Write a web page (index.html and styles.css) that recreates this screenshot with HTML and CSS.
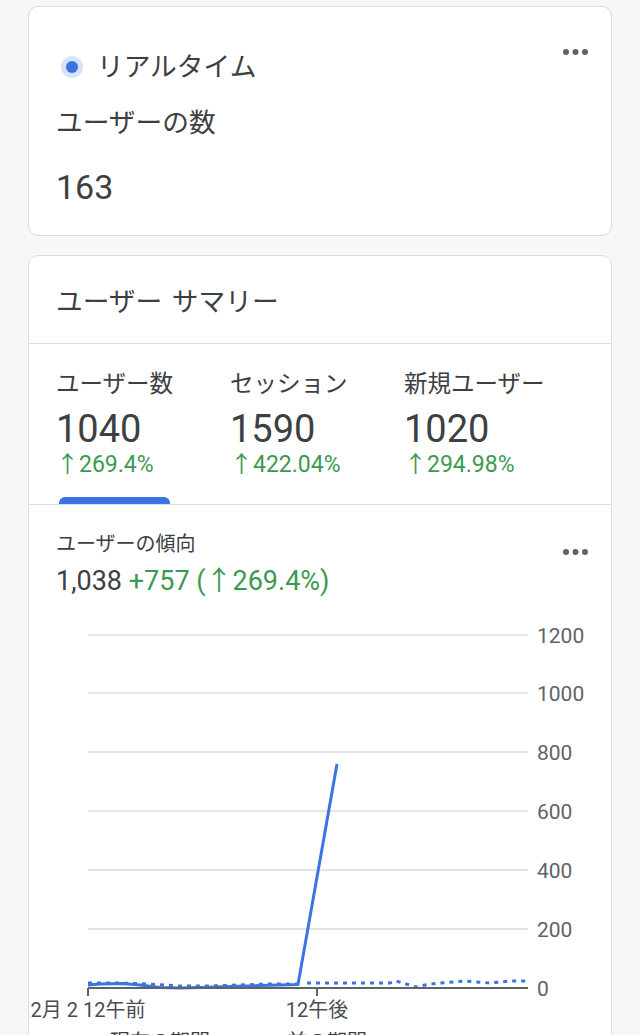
FILE: index.html
```html
<!DOCTYPE html>
<html lang="ja">
<head>
<meta charset="utf-8">
<title>リアルタイム</title>
<link rel="stylesheet" href="styles.css">
</head>
<body>
<div class="page">
  <section class="card card-rt">
    <div class="rt-head">
      <div class="rt-title">
        <span class="live-dot"><span class="live-core"></span></span>
        <span>リアルタイム</span>
      </div>
      <svg class="more" viewBox="0 0 25 6" width="25" height="6"><circle cx="3" cy="3" r="3"/><circle cx="12.5" cy="3" r="3"/><circle cx="22" cy="3" r="3"/></svg>
    </div>
    <div class="rt-metric">ユーザーの数</div>
    <div class="rt-value">163</div>
  </section>

  <section class="card card-summary">
    <header class="sum-title">ユーザー サマリー</header>
    <div class="tabs">
      <div class="tab active">
        <div class="tab-label">ユーザー数</div>
        <div class="tab-value">1040</div>
        <div class="tab-delta">↑269.4%</div>
        <div class="tab-bar"></div>
      </div>
      <div class="tab">
        <div class="tab-label">セッション</div>
        <div class="tab-value">1590</div>
        <div class="tab-delta">↑422.04%</div>
        <div class="tab-bar"></div>
      </div>
      <div class="tab">
        <div class="tab-label">新規ユーザー</div>
        <div class="tab-value">1020</div>
        <div class="tab-delta">↑294.98%</div>
        <div class="tab-bar"></div>
      </div>
    </div>
    <div class="trend">
      <div class="trend-head">
        <div class="trend-info">
          <div class="trend-title">ユーザーの傾向</div>
          <div class="trend-total">1,038 <span class="pos">+757 (↑269.4%)</span></div>
        </div>
        <svg class="more more-trend" viewBox="0 0 25 6" width="25" height="6"><circle cx="3" cy="3" r="3"/><circle cx="12.5" cy="3" r="3"/><circle cx="22" cy="3" r="3"/></svg>
      </div>
      <svg class="chart" width="582" height="412" viewBox="0 0 582 412">
        <g class="grid">
          <line x1="59" x2="499" y1="25" y2="25"/>
          <line x1="59" x2="499" y1="83" y2="83"/>
          <line x1="59" x2="499" y1="142" y2="142"/>
          <line x1="59" x2="499" y1="201" y2="201"/>
          <line x1="59" x2="499" y1="260" y2="260"/>
          <line x1="59" x2="499" y1="319" y2="319"/>
        </g>
        <polyline class="prev" points="59,373 90,373 120,374 150,376 180,376 210,375 240,374 269,374"/>
        <polyline class="prev" points="278,373 361,373 367,371 387,377 401,374 436,371 461,373 481,371 499,371"/>
        <polyline class="cur" points="59,375 71,374 93,373.5 111,375 131,377.5 151,378 171,377.5 201,376.5 231,375.5 251,375 269,374.5 308,154"/>
        <g class="axis">
          <line x1="59" x2="499" y1="378" y2="378"/>
          <line x1="59" x2="59" y1="378" y2="386"/>
          <line x1="288" x2="288" y1="378" y2="386"/>
        </g>
        <g class="ylabels">
          <text x="508" y="33">1200</text>
          <text x="508" y="91">1000</text>
          <text x="508" y="150">800</text>
          <text x="508" y="209">600</text>
          <text x="508" y="268">400</text>
          <text x="508" y="327">200</text>
          <text x="508" y="386">0</text>
        </g>
        <g class="xlabels">
          <text x="59" y="407">2月 2 12午前</text>
          <text x="288" y="407">12午後</text>
        </g>
      </svg>
      <div class="legend">
        <div class="legend-item"><span class="key key-cur"></span><span>現在の期間</span></div>
        <div class="legend-item"><span class="key key-prev"></span><span>前の期間</span></div>
      </div>
    </div>
  </section>
</div>
</body>
</html>
```
FILE: styles.css
```css
html, body {
  margin: 0;
  padding: 0;
}
body {
  background: #f7f7f8;
  font-family: Roboto, "Noto Sans CJK JP", sans-serif;
  color: #3c4043;
  overflow: hidden;
}
.page {
  padding: 6px 28px 0;
  display: flex;
  flex-direction: column;
  gap: 19px;
}
.card {
  background: #fff;
  border: 1px solid #dadce0;
  border-radius: 10px;
}
.card-rt {
  padding: 44px 23px 26px 27px;
}
.rt-head {
  display: flex;
  justify-content: space-between;
  align-items: flex-start;
}
.rt-title {
  display: flex;
  align-items: center;
  gap: 14px;
  padding-left: 5px;
  font-size: 26.7px;
  line-height: 32px;
}
.live-dot {
  width: 22px;
  height: 22px;
  border-radius: 50%;
  background: #d5e3fb;
  display: grid;
  place-items: center;
}
.live-core {
  width: 12px;
  height: 12px;
  border-radius: 50%;
  background: #3b74e2;
}
.more {
  display: block;
  fill: #5f6368;
  margin-top: -2px;
  flex: none;
}
.more-trend {
  margin-top: 18px;
}
.rt-metric {
  margin-top: 24px;
  font-size: 26.7px;
  line-height: 32px;
}
.rt-value {
  margin-top: 26px;
  font-size: 34px;
  line-height: 44px;
}
.sum-title {
  padding: 30px 27px 25px;
  font-size: 26.7px;
  line-height: 32px;
  word-spacing: 3px;
  border-bottom: 1px solid #dadce0;
}
.tabs {
  display: grid;
  grid-template-columns: repeat(3, 174px);
  padding: 25px 27px 0;
  border-bottom: 1px solid #dadce0;
}
.tab-label {
  font-size: 23.5px;
  line-height: 30px;
  white-space: nowrap;
}
.tab-value {
  margin-top: 8px;
  font-size: 38px;
  line-height: 44px;
}
.tab-delta {
  margin-top: 1px;
  font-size: 23px;
  line-height: 26px;
  color: #3c9a50;
  white-space: nowrap;
}
.tab-bar {
  margin-top: 19px;
  margin-left: 3px;
  width: 111px;
  height: 7px;
  border-radius: 6px 6px 0 0;
}
.tab.active .tab-bar {
  background: #3b74e2;
}
.trend {
  padding: 26px 23px 0 27px;
}
.trend-head {
  display: flex;
  justify-content: space-between;
  align-items: flex-start;
}
.trend-title {
  font-size: 20px;
  line-height: 26px;
}
.trend-total {
  margin-top: 8px;
  font-size: 27px;
  line-height: 32px;
}
.pos {
  color: #3c9a50;
}
.chart {
  display: block;
  margin: 13px 0 0 -27px;
  overflow: visible;
}
.grid line {
  stroke: #dadce0;
  stroke-width: 1.5;
}
.axis line {
  stroke: #5f6368;
  stroke-width: 2;
}
.cur {
  fill: none;
  stroke: #3b74e2;
  stroke-width: 3;
  stroke-linejoin: round;
}
.prev {
  fill: none;
  stroke: #3b74e2;
  stroke-width: 3;
  stroke-dasharray: 4 5;
}
.ylabels text {
  font-size: 21px;
  fill: #5f6368;
  font-family: Roboto, "Noto Sans CJK JP", sans-serif;
}
.xlabels text {
  font-size: 20px;
  fill: #4a4d52;
  text-anchor: middle;
  font-family: Roboto, "Noto Sans CJK JP", sans-serif;
}
.legend {
  display: flex;
  gap: 55px;
  margin-top: 7px;
  padding-left: 32px;
  font-size: 20px;
  line-height: 26px;
}
.legend-item {
  display: flex;
  align-items: center;
  gap: 6px;
}
.key {
  width: 16px;
  height: 0;
  border-top: 3px solid #3b74e2;
}
.key-prev {
  border-top-style: dotted;
}
```
